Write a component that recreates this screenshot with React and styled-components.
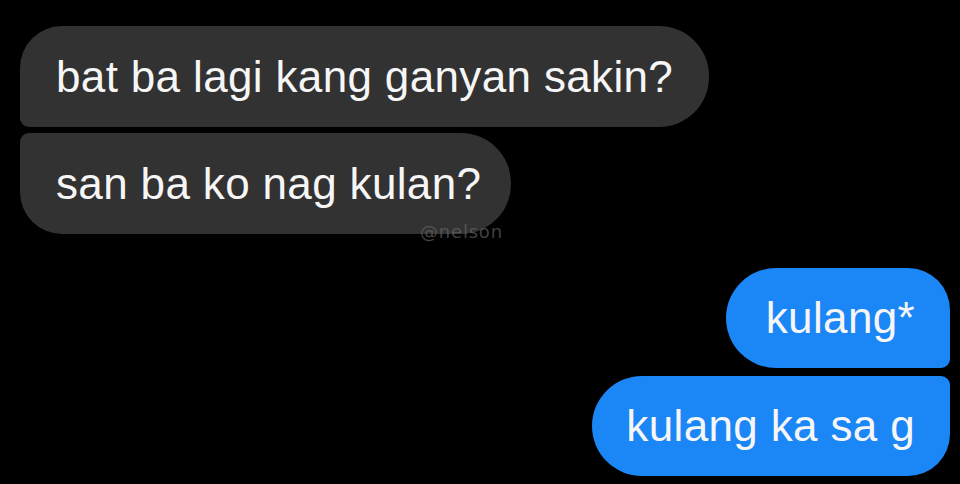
import styled, { createGlobalStyle } from "styled-components";

const GlobalStyle = createGlobalStyle`
  html, body {
    margin: 0;
    padding: 0;
    background: #000;
  }
  body {
    width: 960px;
    height: 484px;
    overflow: hidden;
    font-family: "Liberation Sans", Arial, sans-serif;
  }
`;

const Thread = styled.div`
  width: 960px;
  height: 484px;
  box-sizing: border-box;
  padding: 26px 10px 0 20px;
  display: flex;
  flex-direction: column;
  background: #000;
`;

const Group = styled.div`
  position: relative;
  display: flex;
  flex-direction: column;
  align-items: ${(p) => (p.$mine ? "flex-end" : "flex-start")};
  gap: ${(p) => (p.$mine ? "8px" : "6px")};
  margin-top: ${(p) => p.$offset || "0"};
`;

const Bubble = styled.div`
  box-sizing: border-box;
  height: ${(p) => p.$h || "100px"};
  display: flex;
  align-items: center;
  padding: ${(p) => p.$pad || "0 36px"};
  background: ${(p) => (p.$mine ? "#1b86f6" : "#323232")};
  color: #f6f6f6;
  font-size: 44px;
  letter-spacing: 0.35px;
  white-space: nowrap;
  border-radius: ${(p) => p.$radius};
`;

const Watermark = styled.span`
  position: absolute;
  left: 400px;
  top: 195px;
  font-family: "DejaVu Sans", sans-serif;
  font-size: 18px;
  color: rgba(110, 110, 110, 0.6);
  letter-spacing: 0.8px;
`;

export default function App() {
  return (
    <>
      <GlobalStyle />
      <Thread>
        <Group>
          <Bubble $h="101px" $pad="0 36px 0 36px" $radius="42px 50px 50px 9px">
            bat ba lagi kang ganyan sakin?
          </Bubble>
          <Bubble $h="101px" $pad="0 30px 0 36px" $radius="9px 50px 50px 42px">
            san ba ko nag kulan?
          </Bubble>
          <Watermark>@nelson</Watermark>
        </Group>
        <Group $mine $offset="34px">
          <Bubble $mine $pad="0 35px 0 40px" $radius="50px 42px 9px 50px">
            kulang*
          </Bubble>
          <Bubble $mine $pad="0 35px 0 34px" $radius="50px 9px 42px 50px">
            kulang ka sa g
          </Bubble>
        </Group>
      </Thread>
    </>
  );
}
